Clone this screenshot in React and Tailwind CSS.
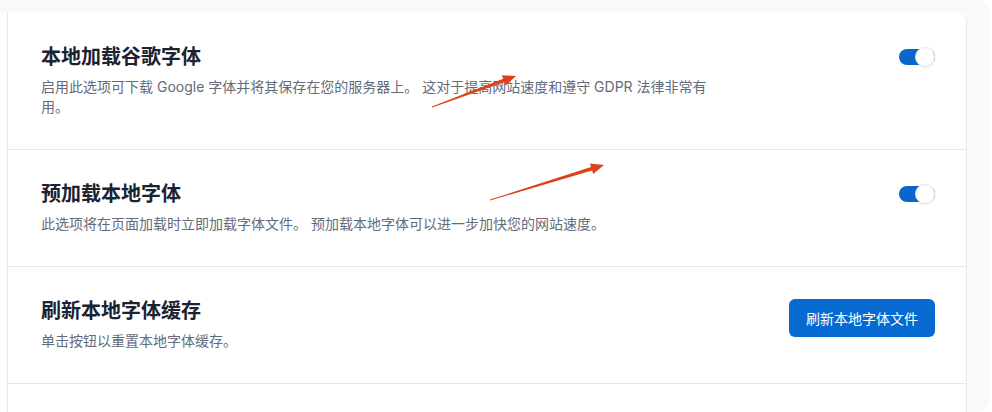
import React from "react";

function Arrow({ tx, ty, hx, hy }) {
  const dx = hx - tx;
  const dy = hy - ty;
  const len = Math.sqrt(dx * dx + dy * dy);
  const ux = dx / len;
  const uy = dy / len;
  const nx = -uy;
  const ny = ux;
  const headLen = 13;
  const headW = 5.5;
  const bx = hx - ux * headLen;
  const by = hy - uy * headLen;
  const sw0 = 0.4;
  const sw1 = 1.8;
  const pts = [
    [tx + nx * sw0, ty + ny * sw0],
    [bx + nx * sw1, by + ny * sw1],
    [bx + nx * headW, by + ny * headW],
    [hx, hy],
    [bx - nx * headW, by - ny * headW],
    [bx - nx * sw1, by - ny * sw1],
    [tx - nx * sw0, ty - ny * sw0],
  ]
    .map((p) => p[0].toFixed(1) + "," + p[1].toFixed(1))
    .join(" ");
  return <polygon points={pts} fill="#dc4418" />;
}

function Toggle() {
  return (
    <div className="relative mt-[1px] h-5 w-9 shrink-0">
      <div className="absolute left-0 top-[2px] h-4 w-9 rounded-full bg-[#0a66cc]" />
      <div className="absolute right-0 top-0 h-5 w-5 rounded-full border border-[#e3e6ea] bg-white shadow-[0_1px_2px_rgba(0,0,0,0.08)]" />
    </div>
  );
}

function Row({ title, desc, right }) {
  return (
    <div className="flex items-start justify-between border-b border-[#e3e7ee] pl-[33px] pr-[31px] pt-[33px] pb-[32px]">
      <div className="flex flex-col">
        <div className="text-[20px] font-bold leading-[22px] text-[#1b2230]">{title}</div>
        <div className="mt-[9px] max-w-[672px] text-[14px] leading-[20px] text-[#646b79]">{desc}</div>
      </div>
      {right}
    </div>
  );
}

export default function App() {
  return (
    <div
      className="relative h-[412px] w-[992px] overflow-hidden bg-white"
      style={{ fontFamily: 'Inter, "Noto Sans CJK SC", sans-serif' }}
    >
      <div className="flex h-[412px] w-[990px] flex-col rounded-tr-[14px] rounded-br-[14px] rounded-bl-[10px] bg-[#f8f9fb] pt-[13px] pr-[23px]">
        <div className="flex flex-1 bg-white">
          <div className="w-[7px] shrink-0 bg-white" />
          <div className="flex flex-1 flex-col rounded-tr-[8px] border-l border-r border-[#e6e9ee] bg-white">
            <Row
              title="本地加载谷歌字体"
              desc="启用此选项可下载 Google 字体并将其保存在您的服务器上。 这对于提高网站速度和遵守 GDPR 法律非常有用。"
              right={<Toggle />}
            />
            <Row
              title="预加载本地字体"
              desc="此选项将在页面加载时立即加载字体文件。 预加载本地字体可以进一步加快您的网站速度。"
              right={<Toggle />}
            />
            <Row
              title="刷新本地字体缓存"
              desc="单击按钮以重置本地字体缓存。"
              right={
                <button className="-mt-[1px] flex h-[38px] shrink-0 items-center rounded-[6px] bg-[#066ad0] px-[17px] text-[14px] text-white">
                  刷新本地字体文件
                </button>
              }
            />
          </div>
        </div>
      </div>
      <svg className="pointer-events-none absolute left-0 top-0" width="992" height="412">
        <Arrow tx={432} ty={107} hx={516} hy={76} />
        <Arrow tx={490} ty={200} hx={604} hy={165} />
      </svg>
    </div>
  );
}
